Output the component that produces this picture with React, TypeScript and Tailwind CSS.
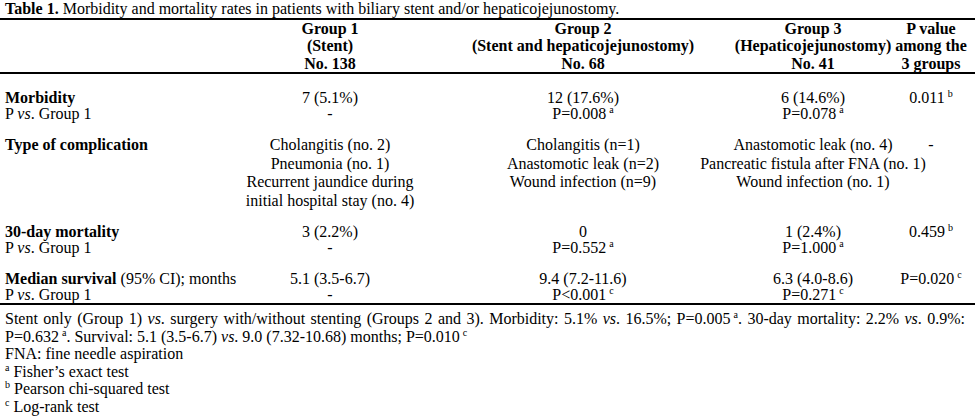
import React from "react";

const Sup = ({ c, gap = true }: { c: string; gap?: boolean }) => (
  <span className={`relative top-[-6px] text-[10px] leading-none ${gap ? "ml-[3px]" : ""}`}>{c}</span>
);

const Vs = () => <i>vs</i>;

const Cell = ({ lines, className = "" }: { lines: React.ReactNode[]; className?: string }) => (
  <div className={`flex flex-col items-center ${className}`}>
    {lines.map((l, i) => (
      <div key={i} className="whitespace-nowrap">
        {l}
      </div>
    ))}
  </div>
);

const COLS = "grid grid-cols-[260px_140px_366px_94px_27px_88px]";

interface RowProps {
  label: React.ReactNode[];
  g1: React.ReactNode[];
  g2: React.ReactNode[];
  g3: React.ReactNode[];
  p: React.ReactNode[];
  className?: string;
}

const Row = ({ label, g1, g2, g3, p, className = "" }: RowProps) => (
  <div className={`${COLS} ${className}`}>
    <div className="flex flex-col pl-[5px]">
      {label.map((l, i) => (
        <div key={i} className="whitespace-nowrap">
          {l}
        </div>
      ))}
    </div>
    <Cell lines={g1} />
    <Cell lines={g2} />
    <Cell lines={g3} />
    <div />
    <Cell lines={p} />
  </div>
);

const PvsG1 = (
  <span>
    P <Vs />. Group 1
  </span>
);

export default function App() {
  return (
    <div
      className="w-[975px] h-[419px] bg-white text-black text-[16px] leading-[17.5px] overflow-hidden"
      style={{ fontFamily: '"Liberation Serif", "Times New Roman", serif' }}
    >
      {/* title */}
      <div className="pl-[5px] whitespace-nowrap">
        <b>Table 1.</b> Morbidity and mortality rates in patients with biliary stent and/or hepaticojejunostomy.
      </div>

      {/* header */}
      <div className={`${COLS} border-t-2 border-b-2 border-black font-bold`}>
        <div />
        <Cell lines={["Group 1", "(Stent)", "No. 138"]} />
        <Cell lines={["Group 2", "(Stent and hepaticojejunostomy)", "No. 68"]} />
        <Cell lines={["Group 3", "(Hepaticojejunostomy)", "No. 41"]} />
        <div />
        <Cell lines={["P value", "among the", "3 groups"]} />
      </div>

      {/* body */}
      <div className="flex flex-col gap-[14px] pt-[16px] border-b-2 border-black leading-[16px]">
        <Row
          label={[<b>Morbidity</b>, PvsG1]}
          g1={["7 (5.1%)", "-"]}
          g2={["12 (17.6%)", <span>P=0.008<Sup c="a" /></span>]}
          g3={["6 (14.6%)", <span>P=0.078<Sup c="a" /></span>]}
          p={[<span>0.011<Sup c="b" /></span>]}
        />
        <Row
          className="leading-[18.5px]"
          label={[<b>Type of complication</b>]}
          g1={[
            "Cholangitis (no. 2)",
            "Pneumonia (no. 1)",
            "Recurrent jaundice during",
            "initial hospital stay (no. 4)",
          ]}
          g2={["Cholangitis (n=1)", "Anastomotic leak (n=2)", "Wound infection (n=9)"]}
          g3={["Anastomotic leak (no. 4)", "Pancreatic fistula after FNA (no. 1)", "Wound infection (no. 1)"]}
          p={["-"]}
        />
        <Row
          label={[<b>30-day mortality</b>, PvsG1]}
          g1={["3 (2.2%)", "-"]}
          g2={["0", <span>P=0.552<Sup c="a" /></span>]}
          g3={["1 (2.4%)", <span>P=1.000<Sup c="a" /></span>]}
          p={[<span>0.459<Sup c="b" /></span>]}
        />
        <Row
          className="mt-[1px]"
          label={[
            <span>
              <b>Median survival</b> (95% CI); months
            </span>,
            PvsG1,
          ]}
          g1={["5.1 (3.5-6.7)", "-"]}
          g2={["9.4 (7.2-11.6)", <span>P&lt;0.001<Sup c="c" /></span>]}
          g3={["6.3 (4.0-8.6)", <span>P=0.271<Sup c="c" /></span>]}
          p={[<span>P=0.020<Sup c="c" /></span>]}
        />
      </div>

      {/* footnotes */}
      <div className="pl-[5px] pr-[10px] pt-[5px]">
        <p className="text-justify">
          Stent only (Group 1) <Vs />. surgery with/without stenting (Groups 2 and 3). Morbidity: 5.1% <Vs />. 16.5%;
          P=0.005<Sup c="a" />. 30-day mortality: 2.2% <Vs />. 0.9%: P=0.632<Sup c="a" />. Survival: 5.1 (3.5-6.7){" "}
          <Vs />. 9.0 (7.32-10.68) months; P=0.010<Sup c="c" />
        </p>
        <p>FNA: fine needle aspiration</p>
        <p>
          <Sup c="a" gap={false} /> Fisher’s exact test
        </p>
        <p>
          <Sup c="b" gap={false} /> Pearson chi-squared test
        </p>
        <p>
          <Sup c="c" gap={false} /> Log-rank test
        </p>
      </div>
    </div>
  );
}
